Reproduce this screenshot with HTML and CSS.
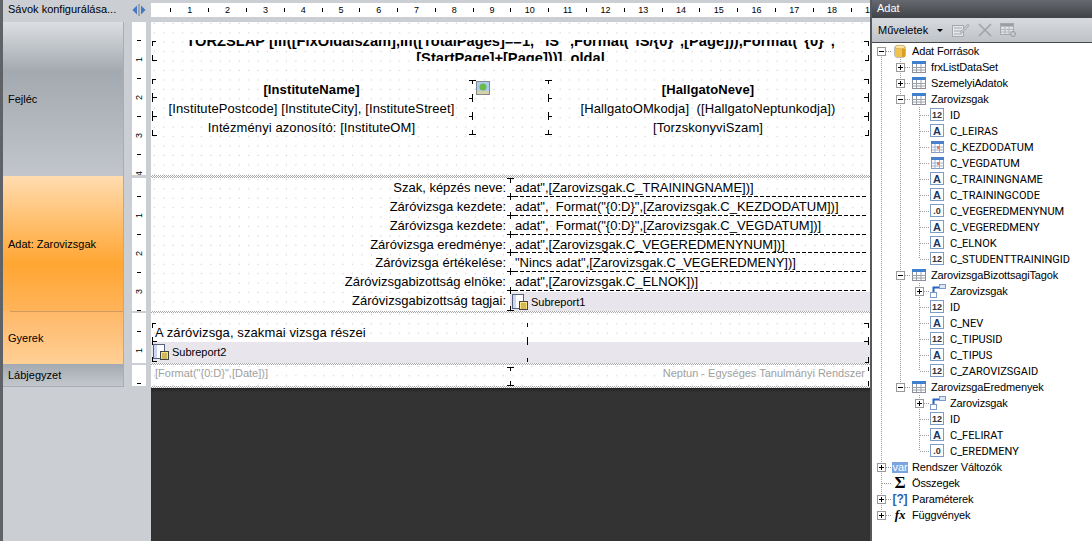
FILE: index.html
```html
<!DOCTYPE html>
<html lang="en">

<head>
  <meta charset="UTF-8" />
  <title>Report designer</title>
  <link rel="stylesheet" href="styles.css">
</head>

<body>
  <svg class="defs" width="0" height="0">
    <symbol id="i-table" viewBox="0 0 16 16">
      <rect x="1.5" y="2.5" width="13" height="11" fill="#fff" stroke="#8a8f98"/>
      <rect x="1" y="2" width="14" height="3" fill="#3f7fd0"/>
      <path d="M1.5 8.5h13M1.5 11h13M5.5 5v8M10 5v8" stroke="#9aa0a8" fill="none"/>
    </symbol>
    <symbol id="i-date" viewBox="0 0 16 16">
      <rect x="1.5" y="2.5" width="12" height="11" fill="#fff" stroke="#8a9cc0"/>
      <rect x="1" y="2" width="13" height="3" fill="#4a80cc"/>
      <path d="M1.5 8h12M1.5 11h12M5 5v8M9.500 5v8" stroke="#9fb0d0" fill="none"/>
      <rect x="7" y="7" width="3" height="3" fill="#e8845c"/>
    </symbol>
    <symbol id="i-rel" viewBox="0 0 16 16">
      <rect x="9.500" y="1.500" width="6" height="4" fill="#dde6f5" stroke="#7c9bc8"/>
      <rect x="0.500" y="9.500" width="6" height="5" fill="#fff" stroke="#7c9bc8"/>
      <path d="M3.500 9V4.500H9" stroke="#2a62c0" stroke-width="2" fill="none"/>
    </symbol>
    <symbol id="i-db" viewBox="0 0 16 16">
      <rect x="2.500" y="2.500" width="11" height="12" rx="3" fill="#f2c24e" stroke="#b9b9b9"/>
      <ellipse cx="8" cy="4" rx="5" ry="1.800" fill="#fbe6a8" stroke="#c9a040" stroke-width=".6"/>
      <rect x="10" y="6" width="3" height="8" fill="#d99e22"/>
    </symbol>
    <symbol id="i-sub" viewBox="0 0 16 16">
      <rect x="0.500" y="0.500" width="11" height="14" fill="#fdfdff" stroke="#55627e"/>
      <rect x="1" y="1" width="3" height="13" fill="#c9d6ee"/>
      <rect x="7.500" y="7.500" width="8" height="8" fill="#fbe27e" stroke="#444"/>
      <path d="M9 10h5M9 12h5M9 14h5" stroke="#a88e2e"/>
    </symbol>
  </svg>

  <div class="app">
    <div class="designer">
      <div class="topbar">
        <div class="topbar-label">Sávok konfigurálása...</div>
        <svg class="arrows" width="14" height="12" viewBox="0 0 14 12">
          <path d="M5 1.500v9L0.500 6z" fill="#3f78c8"/>
          <rect x="6" y="0" width="2" height="12" fill="#a0a4aa"/>
          <path d="M9 1.500v9L13.500 6z" fill="#3f78c8"/>
        </svg>
        <div class="hruler">
          <i></i><b>1</b><i></i><b>2</b><i></i><b>3</b><i></i><b>4</b><i></i><b>5</b><i></i><b>6</b><i></i><b>7</b><i></i><b>8</b><i></i><b>9</b><i></i><b>10</b><i></i><b>11</b><i></i><b>12</b><i></i><b>13</b><i></i><b>14</b><i></i><b>15</b><i></i><b>16</b><i></i><b>17</b><i></i><b>18</b><i></i><b>19</b>
        </div>
      </div>

      <div class="workspace">
        <div class="bands">
          <div class="band band-header">Fejléc</div>
          <div class="band band-data">Adat: Zarovizsgak</div>
          <div class="band band-child">Gyerek</div>
          <div class="band band-footer">Lábjegyzet</div>
        </div>

        <div class="vruler">
          <div class="vr-sec sec-1"><i></i><b>1</b><i></i><b>2</b><i></i><b>3</b><i></i><b>4</b></div>
          <div class="vr-sec sec-2"><i></i><b>1</b><i></i><b>2</b><i></i><b>3</b><i></i></div>
          <div class="vr-sec sec-3"><i></i><b>1</b></div>
          <div class="vr-sec sec-4"><i></i></div>
        </div>

        <div class="page-col">
          <div class="page">
            <section class="sec sec-1 head-sec">
              <div class="title"><div>TÖRZSLAP [IIf([FixOldalszam],IIf([TotalPages]==1, "IS" ,Format("IS/{0}",[Page])),Format("{0}",</div><div>[StartPage]+[Page]))]. oldal</div></div>
              <div class="head-cols">
                <div class="head-col">
                  <strong>[InstituteName]</strong>
                  <span>[InstitutePostcode] [InstituteCity], [InstituteStreet]</span>
                  <span>Intézményi azonosító: [InstituteOM]</span>
                </div>
                <div class="photo">
                  <svg width="14" height="14" viewBox="0 0 14 14">
                    <rect x=".5" y=".5" width="13" height="13" fill="#a9cdec" stroke="#888"/>
                    <circle cx="7" cy="6" r="3.500" fill="#6cb84a"/>
                    <rect x="1" y="10" width="12" height="3" fill="#d8d0a8"/>
                  </svg>
                </div>
                <div class="head-col">
                  <strong>[HallgatoNeve]</strong>
                  <span>[HallgatoOMkodja]&nbsp; ([HallgatoNeptunkodja])</span>
                  <span>[TorzskonyviSzam]</span>
                </div>
              </div>
            </section>
            <div class="sep sep-1"></div>

            <section class="sec sec-2 data-rows">
              <div class="data-row"><span class="lbl">Szak, képzés neve:</span><span class="val">adat",[Zarovizsgak.C_TRAININGNAME])]</span></div>
              <div class="data-row"><span class="lbl">Záróvizsga kezdete:</span><span class="val">adat",&nbsp; Format("{0:D}",[Zarovizsgak.C_KEZDODATUM])]</span></div>
              <div class="data-row"><span class="lbl">Záróvizsga kezdete:</span><span class="val">adat",&nbsp; Format("{0:D}",[Zarovizsgak.C_VEGDATUM])]</span></div>
              <div class="data-row"><span class="lbl">Záróvizsga eredménye:</span><span class="val">adat",[Zarovizsgak.C_VEGEREDMENYNUM])]</span></div>
              <div class="data-row"><span class="lbl">Záróvizsga értékelése:</span><span class="val">"Nincs adat",[Zarovizsgak.C_VEGEREDMENY])]</span></div>
              <div class="data-row"><span class="lbl">Záróvizsgabizottság elnöke:</span><span class="val">adat",[Zarovizsgak.C_ELNOK])]</span></div>
              <div class="data-row last-row"><span class="lbl">Záróvizsgabizottság tagjai:</span>
                <span class="subreport sub-1"><svg class="ico"><use href="#i-sub"/></svg>Subreport1</span>
              </div>
            </section>
            <div class="sep sep-2"></div>

            <section class="sec sec-3 child-sec">
              <div class="child-title">A záróvizsga, szakmai vizsga részei</div>
              <div class="subreport sub-2"><svg class="ico"><use href="#i-sub"/></svg>Subreport2</div>
            </section>
            <div class="sep sep-3"></div>

            <section class="sec sec-4 foot-sec">
              <span>[Format("{0:D}",[Date])]</span>
              <span>Neptun - Egységes Tanulmányi Rendszer</span>
            </section>
            <div class="sep sep-4"></div>

            <!-- handles of the report objects -->
            <svg class="handles" width="719" height="366" viewBox="151 22 719 366">
              <path stroke="#000" fill="none" shape-rendering="crispEdges" d="
                M156 41.500h-3.500v4 M152.500 55v5h4
                M156 79.500h-3.500v4 M152.500 93v9 M152.500 97.500h4 M152.500 111v10 M152.500 116.500h4 M152.500 130v5h4
                M469 80.500h7 M472.500 80v4 M472.500 94v8 M469 98.500h4 M472.500 112v8 M469 116.500h4 M472.500 130v5 M469 134.500h7
                M545 80.500h7 M548.500 80v4 M548.500 94v8 M548 98.500h4 M548.500 112v8 M548 116.500h4 M548.500 130v5 M545 134.500h7
                M864 41.500h4v4 M868.500 55v5h-4 M864 79.500h4v4 M868.500 93v9 M864 97.500h4 M868.500 112v9 M864 116.500h4 M868.500 130v5h-4
                M507 178.500h7 M510.500 178v5
                M507 196.500h7 M510.500 193v7 M507 215.500h7 M510.500 212v7 M507 234.500h7 M510.500 231v7 M507 252.500h7 M510.500 249v7 M507 271.500h7 M510.500 268v7 M507 290.500h7 M510.500 287v7 M507 310.500h7 M510.500 306v5
                M156 323.500h-3.500v4 M152.500 337v8 M152.500 341.500h4 M152.500 357v4h4
                M527.500 323v4 M527.500 337v8 M527.500 358v4
                M864 323.500h4v4 M868.500 337v8 M864 341.500h4 M868.500 357v5h-4
                M507 367.500h7 M510.500 367v4 M510.500 381v5 M507 385.500h7
                M868.500 367v4 M868.500 381v5"/>
              <path stroke="#000" fill="none" stroke-dasharray="4 2" shape-rendering="crispEdges" d="M514 196.500H866 M514 215.500H866 M514 234.500H866 M514 252.500H866 M514 271.500H866 M514 290.500H866"/>
            </svg>
          </div>
          <div class="dark"></div>
        </div>
      </div>
    </div>

    <aside class="panel">
      <div class="panel-title">Adat</div>
      <div class="toolbar">
        <span class="tool-menu">Műveletek</span>
        <span class="caret"></span>
        <svg class="tool-ico" width="18" height="16" viewBox="0 0 18 16">
          <rect x=".5" y="3.500" width="11" height="11" fill="#e4e6e9" stroke="#a5a8ad"/>
          <path d="M2 6h8M2 9h8M2 12h8" stroke="#a5a8ad"/>
          <path d="M8 10l8-8 1.500 1.500-8 8z" fill="#c0c3c7" stroke="#a5a8ad" stroke-width=".7"/>
        </svg>
        <svg class="tool-ico" width="16" height="16" viewBox="0 0 16 16">
          <path d="M2 2l12 12M14 2L2 14" stroke="#a0a3a8" stroke-width="1.600"/>
        </svg>
        <svg class="tool-ico" width="17" height="16" viewBox="0 0 17 16">
          <rect x=".5" y="1.500" width="13" height="11" fill="#dfe1e4" stroke="#a5a8ad"/>
          <rect x="1" y="2" width="12" height="2.500" fill="#9a9da2"/>
          <path d="M1 7.500h12M1 10h12M5 4v8M9 4v8" stroke="#b4b7bb"/>
          <circle cx="13" cy="12" r="2.500" fill="#c7cacd" stroke="#9a9da2"/>
        </svg>
      </div>

      <div class="tree">
        <div class="row"><span class="node first minus"></span><svg class="ico"><use href="#i-db"/></svg>Adat Források</div>

        <div class="row"><span class="vl"></span><span class="node plus"></span><svg class="ico"><use href="#i-table"/></svg>frxListDataSet</div>
        <div class="row"><span class="vl"></span><span class="node plus"></span><svg class="ico"><use href="#i-table"/></svg>SzemelyiAdatok</div>
        <div class="row"><span class="vl"></span><span class="node minus"></span><svg class="ico"><use href="#i-table"/></svg>Zarovizsgak</div>

        <div class="row f"><span class="vl"></span><span class="vl"></span><span class="node"></span><svg class="ico"><rect class="box" x=".5" y="1.500" width="13" height="12"/><text class="num" x="7" y="11">12</text></svg>ID</div>
        <div class="row f"><span class="vl"></span><span class="vl"></span><span class="node"></span><svg class="ico"><rect class="box" x=".5" y="1.500" width="13" height="12"/><text class="chr" x="7" y="12">A</text></svg>C_LEIRAS</div>
        <div class="row f"><span class="vl"></span><span class="vl"></span><span class="node"></span><svg class="ico"><use href="#i-date"/></svg>C_KEZDODATUM</div>
        <div class="row f"><span class="vl"></span><span class="vl"></span><span class="node"></span><svg class="ico"><use href="#i-date"/></svg>C_VEGDATUM</div>
        <div class="row f"><span class="vl"></span><span class="vl"></span><span class="node"></span><svg class="ico"><rect class="box" x=".5" y="1.500" width="13" height="12"/><text class="chr" x="7" y="12">A</text></svg>C_TRAININGNAME</div>
        <div class="row f"><span class="vl"></span><span class="vl"></span><span class="node"></span><svg class="ico"><rect class="box" x=".5" y="1.500" width="13" height="12"/><text class="chr" x="7" y="12">A</text></svg>C_TRAININGCODE</div>
        <div class="row f"><span class="vl"></span><span class="vl"></span><span class="node"></span><svg class="ico"><rect class="box" x=".5" y="1.500" width="13" height="12"/><text class="num" x="7" y="11">.0</text></svg>C_VEGEREDMENYNUM</div>
        <div class="row f"><span class="vl"></span><span class="vl"></span><span class="node"></span><svg class="ico"><rect class="box" x=".5" y="1.500" width="13" height="12"/><text class="chr" x="7" y="12">A</text></svg>C_VEGEREDMENY</div>
        <div class="row f"><span class="vl"></span><span class="vl"></span><span class="node"></span><svg class="ico"><rect class="box" x=".5" y="1.500" width="13" height="12"/><text class="chr" x="7" y="12">A</text></svg>C_ELNOK</div>
        <div class="row f"><span class="vl"></span><span class="vl"></span><span class="node last"></span><svg class="ico"><rect class="box" x=".5" y="1.500" width="13" height="12"/><text class="num" x="7" y="11">12</text></svg>C_STUDENTTRAININGID</div>

        <div class="row"><span class="vl"></span><span class="node minus"></span><svg class="ico"><use href="#i-table"/></svg>ZarovizsgaBizottsagiTagok</div>
        <div class="row"><span class="vl"></span><span class="vl"></span><span class="node plus"></span><svg class="ico"><use href="#i-rel"/></svg>Zarovizsgak</div>
        <div class="row f"><span class="vl"></span><span class="vl"></span><span class="node"></span><svg class="ico"><rect class="box" x=".5" y="1.500" width="13" height="12"/><text class="num" x="7" y="11">12</text></svg>ID</div>
        <div class="row f"><span class="vl"></span><span class="vl"></span><span class="node"></span><svg class="ico"><rect class="box" x=".5" y="1.500" width="13" height="12"/><text class="chr" x="7" y="12">A</text></svg>C_NEV</div>
        <div class="row f"><span class="vl"></span><span class="vl"></span><span class="node"></span><svg class="ico"><rect class="box" x=".5" y="1.500" width="13" height="12"/><text class="num" x="7" y="11">12</text></svg>C_TIPUSID</div>
        <div class="row f"><span class="vl"></span><span class="vl"></span><span class="node"></span><svg class="ico"><rect class="box" x=".5" y="1.500" width="13" height="12"/><text class="chr" x="7" y="12">A</text></svg>C_TIPUS</div>
        <div class="row f"><span class="vl"></span><span class="vl"></span><span class="node last"></span><svg class="ico"><rect class="box" x=".5" y="1.500" width="13" height="12"/><text class="num" x="7" y="11">12</text></svg>C_ZAROVIZSGAID</div>

        <div class="row"><span class="vl"></span><span class="node last minus"></span><svg class="ico"><use href="#i-table"/></svg>ZarovizsgaEredmenyek</div>
        <div class="row"><span class="vl"></span><span class="vl none"></span><span class="node plus"></span><svg class="ico"><use href="#i-rel"/></svg>Zarovizsgak</div>
        <div class="row f"><span class="vl"></span><span class="vl none"></span><span class="node"></span><svg class="ico"><rect class="box" x=".5" y="1.500" width="13" height="12"/><text class="num" x="7" y="11">12</text></svg>ID</div>
        <div class="row f"><span class="vl"></span><span class="vl none"></span><span class="node"></span><svg class="ico"><rect class="box" x=".5" y="1.500" width="13" height="12"/><text class="chr" x="7" y="12">A</text></svg>C_FELIRAT</div>
        <div class="row f"><span class="vl"></span><span class="vl none"></span><span class="node last"></span><svg class="ico"><rect class="box" x=".5" y="1.500" width="13" height="12"/><text class="num" x="7" y="11">.0</text></svg>C_EREDMENY</div>

        <div class="row"><span class="node plus"></span><span class="ico-var">var</span>Rendszer Változók</div>
        <div class="row"><span class="node"></span><span class="ico-sum">Σ</span>Összegek</div>
        <div class="row"><span class="node plus"></span><span class="ico-par">[?]</span>Paraméterek</div>
        <div class="row"><span class="node last plus"></span><span class="ico-fx">fx</span>Függvények</div>
      </div>
    </aside>
  </div>
</body>

</html>
```

FILE: styles.css
```css
html,
body {
  margin: 0;
  height: 100%;
  overflow: hidden;
}

body {
  font-family: 'Liberation Sans', sans-serif;
  font-size: 11px;
  color: #000;
}

.defs {
  position: absolute;
}

.app {
  display: flex;
  width: 1092px;
  height: 541px;
  overflow: hidden;
}

.designer {
  flex: 0 0 870px;
  display: flex;
  flex-direction: column;
  box-sizing: border-box;
  border-left: 3px solid #5f6368;
  background: #cbcfd4;
}

.topbar {
  flex: 0 0 22px;
  display: flex;
  box-sizing: border-box;
  padding-top: 3px;
}

.topbar-label {
  flex: 0 0 129px;
  box-sizing: border-box;
  padding: 0 0 0 5px;
  line-height: 13px;
  white-space: nowrap;
}

.arrows {
  flex: none;
  margin-top: 1px;
}

.hruler {
  flex: none;
  width: 719px;
  margin-left: 5px;
  height: 14px;
  box-sizing: border-box;
  padding-left: 10.5px;
  display: flex;
  align-items: center;
  background: #fff;
  overflow: hidden;
}

.hruler i,
.hruler b {
  flex: 0 0 18.9px;
  text-align: center;
  font-style: normal;
  font-weight: normal;
  font-size: 9px;
  position: relative;
}

.hruler i::after {
  content: "";
  display: block;
  width: 1px;
  height: 4px;
  margin: 0 auto;
  background: #000;
}

.workspace {
  flex: 1;
  display: flex;
  min-height: 0;
}

.bands {
  flex: 0 0 120px;
  height: 365px;
  border-right: 1px solid #a9adb3;
  box-sizing: content-box;
  width: 119px;
}

.band {
  display: flex;
  align-items: center;
  box-sizing: border-box;
  padding-left: 5px;
}

.band-header {
  height: 154px;
  padding-top: 0;
  background: linear-gradient(#dcdfe2 0, #a3a9b0 32%, #c2c6cb 100%);
}

.band-data {
  height: 135px;
  background: linear-gradient(#ffdcb0 0, #ffa633 65%, #ffb45a 100%);
}

.band-child {
  height: 53px;
  background:
    linear-gradient(#d09a60, #d09a60) 7px 0 / 100% 1px no-repeat,
    linear-gradient(#ffb868 0, #ffcf95 100%);
}

.band-footer {
  height: 23px;
  border-bottom: 1px solid #a9adb3;
  background: linear-gradient(#a3a9b0 0, #c4c8cc 100%);
}

.vruler {
  flex: 0 0 14px;
  margin-left: 8px;
}

.vr-sec {
  box-sizing: border-box;
  padding-top: 9.5px;
  background: #fff;
  display: flex;
  flex-direction: column;
  overflow: hidden;
}

.vr-sec i,
.vr-sec b {
  flex: 0 0 18.9px;
  display: flex;
  align-items: center;
  justify-content: center;
  font-weight: normal;
  font-size: 9px;
}

.vr-sec b {
  transform: rotate(-90deg);
}

.vr-sec i::after {
  content: "";
  width: 4px;
  height: 1px;
  background: #000;
}

.sec-1 {
  height: 153px;
}

.sec-2 {
  height: 133px;
}

.sec-3 {
  height: 50px;
}

.sec-4 {
  height: 21px;
}

.vruler .sec-1,
.vruler .sec-2,
.vruler .sec-3 {
  margin-bottom: 2px;
}

.vruler .sec-1 {
  margin-bottom: 3px;
}

.page-col {
  flex: 0 0 719px;
  margin-left: 5px;
  display: flex;
  flex-direction: column;
}

.page {
  position: relative;
  flex: none;
}

.sec {
  position: relative;
  box-sizing: border-box;
  background-color: #fff;
  background-image: radial-gradient(circle at 1px 1px, #aaa .5px, transparent .7px);
  background-size: 9.45px 9.45px;
  background-position: 2px 0;
}

.sep {
  background: repeating-conic-gradient(#a8a8a8 0 25%, #fff 0 50%) 0 0 / 2px 2px;
  height: 2px;
}

.sep-1 {
  height: 3px;
}

/* header band */
.head-sec {
  padding-top: 18px;
}

.title {
  height: 21px;
  overflow: hidden;
  text-align: center;
  font-size: 14.67px;
  font-weight: bold;
  line-height: 17px;
  white-space: nowrap;
}

.title div:first-child {
  margin-top: -7px;
}

.head-cols {
  display: grid;
  grid-template-columns: 321px 76px 320px;
  margin-top: 19px;
}

.head-col {
  display: flex;
  flex-direction: column;
  align-items: center;
  font-size: 13px;
  letter-spacing: .1px;
  line-height: 19px;
}

.photo {
  padding: 1px 0 0 4px;
  line-height: 0;
}

/* data band */
.data-rows {
  display: flex;
  flex-direction: column;
  padding-top: 1px;
}

.data-row {
  display: grid;
  grid-template-columns: 355px 364px;
  height: 18.9px;
  font-size: 13px;
  line-height: 18px;
  white-space: nowrap;
}

.lbl {
  text-align: right;
}

.val {
  padding-left: 9px;
  overflow: hidden;
}

.subreport {
  display: flex;
  align-items: center;
  font-size: 11px;
  background: #e8e6ec;
}

.sub-1 {
  margin: 0 0 0 4px;
  height: 19px;
  padding-left: 2px;
}

.sub-2 {
  height: 21px;
  padding: 0 0 2px 2px;
  box-sizing: border-box;
}

.subreport .ico {
  margin: 0 3px 0 0;
}

/* child band */
.child-sec {
  padding-top: 10px;
}

.child-title {
  font-size: 13px;
  letter-spacing: .1px;
  line-height: 19px;
  padding-left: 4px;
}

/* footer band */
.foot-sec {
  display: flex;
  justify-content: space-between;
  align-items: center;
  padding: 0 5px 5px 4px;
  color: #a0a0a0;
  font-size: 11px;
}

.handles {
  position: absolute;
  top: 0;
  left: 0;
  pointer-events: none;
}

.dark {
  flex: 1;
  background: #333;
  box-shadow: inset 0 3px 3px -1px #222;
}

/* right panel */
.panel {
  flex: 1;
  display: flex;
  flex-direction: column;
  border-left: 2px solid #55585c;
  background: #fff;
  min-width: 0;
}

.panel-title {
  flex: 0 0 18px;
  padding-left: 5px;
  line-height: 16px;
  color: #fff;
  font-size: 11px;
  background: linear-gradient(#666a70, #3f4246);
}

.toolbar {
  flex: 0 0 24px;
  display: flex;
  align-items: center;
  padding-left: 6px;
  border-bottom: 1px solid #45484c;
  background: linear-gradient(#d8dade, #bfc2c7);
}

.tool-menu {
  width: 56px;
}

.caret {
  width: 0;
  height: 0;
  border: 3px solid transparent;
  border-top: 3px solid #000;
  border-bottom: 0;
  margin: 1px 9px 0 3px;
}

.tool-ico {
  flex: none;
  margin-right: 7px;
}

.tree {
  flex: 1;
  padding-top: 0;
}

.row {
  display: flex;
  align-items: center;
  height: 16px;
  letter-spacing: -.15px;
  white-space: nowrap;
}

/* field names are mostly capitals, Roboto keeps them narrow */
.row.f {
  font-family: Roboto, sans-serif;
  letter-spacing: 0;
}

.vl,
.node {
  flex: 0 0 19px;
  height: 16px;
  position: relative;
}

.vl {
  background: repeating-linear-gradient(#999 0 1px, transparent 1px 2px) 9px 0 / 1px 100% no-repeat;
}

.vl.none {
  background: none;
}

.node {
  background:
    repeating-linear-gradient(#999 0 1px, transparent 1px 2px) 9px 0 / 1px 100% no-repeat,
    repeating-linear-gradient(90deg, #999 0 1px, transparent 1px 2px) 10px 8px / 9px 1px no-repeat;
}

.node.last {
  background:
    repeating-linear-gradient(#999 0 1px, transparent 1px 2px) 9px 0 / 1px 8px no-repeat,
    repeating-linear-gradient(90deg, #999 0 1px, transparent 1px 2px) 10px 8px / 9px 1px no-repeat;
}

.node.first {
  background:
    repeating-linear-gradient(#999 0 1px, transparent 1px 2px) 9px 8px / 1px 8px no-repeat,
    repeating-linear-gradient(90deg, #999 0 1px, transparent 1px 2px) 10px 8px / 9px 1px no-repeat;
}

.plus::before,
.minus::before {
  content: "";
  position: absolute;
  left: 5px;
  top: 4px;
  width: 7px;
  height: 7px;
  border: 1px solid #999;
  background: linear-gradient(#000, #000) center / 5px 1px no-repeat #fff;
}

.plus::after {
  content: "";
  position: absolute;
  left: 9px;
  top: 6px;
  width: 1px;
  height: 5px;
  background: #000;
}

.ico {
  flex: none;
  width: 16px;
  height: 16px;
  margin: 0 4px 0 1px;
}

.box {
  fill: #fff;
  stroke: #7f9cc6;
}

.chr {
  font: bold 11px 'Liberation Sans', sans-serif;
  text-anchor: middle;
  fill: #1f3560;
}

.num {
  font: 9px 'Liberation Sans', sans-serif;
  font-weight: bold;
  letter-spacing: 0;
  text-anchor: middle;
  fill: #333;
}

.ico-var,
.ico-sum,
.ico-par,
.ico-fx {
  flex: none;
  width: 16px;
  margin: 0 4px 0 1px;
  text-align: center;
  line-height: 16px;
}

.ico-var {
  height: 11px;
  line-height: 10px;
  background: #7aa6e0;
  color: #fff;
  font-size: 11px;
}

.ico-sum {
  font: bold 17px 'Liberation Serif', serif;
}

.ico-par {
  font-weight: bold;
  font-size: 12px;
  color: #2a62b0;
}

.ico-fx {
  font: italic bold 13px 'Liberation Serif', serif;
}
```
